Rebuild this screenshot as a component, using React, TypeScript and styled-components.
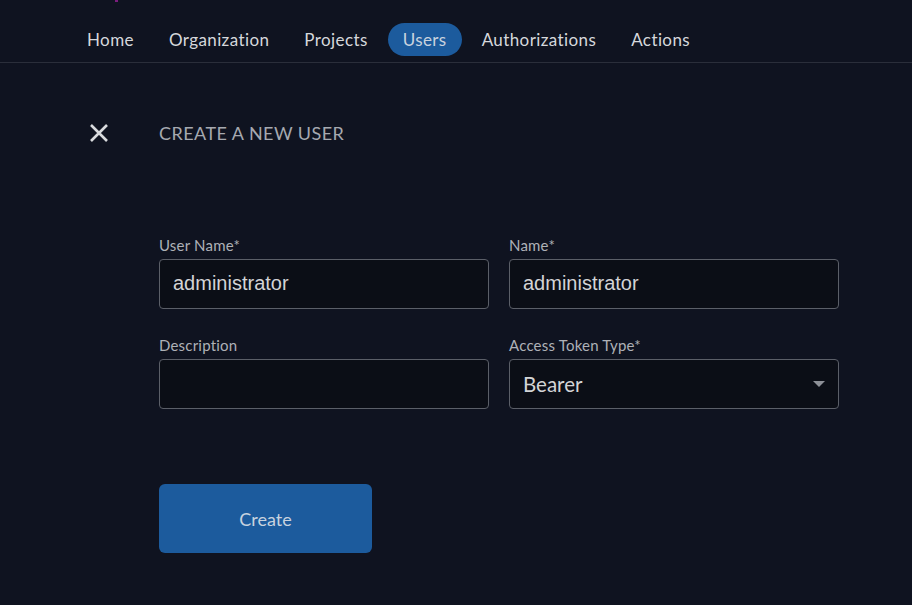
import React from "react";
import styled, { createGlobalStyle } from "styled-components";

const Global = createGlobalStyle`
  html, body { margin: 0; padding: 0; background: #0f1320; }
  body { font-family: Lato, "Open Sans", sans-serif; }
  * { box-sizing: border-box; }
`;

const Page = styled.div`
  width: 912px;
  height: 605px;
  background: #0f1320;
  overflow: hidden;
  position: relative;
`;

const LogoDot = styled.div`
  position: absolute;
  left: 115px;
  top: 0;
  width: 3px;
  height: 2px;
  background: #7a1d7c;
`;

const NavBar = styled.nav`
  display: flex;
  align-items: flex-start;
  gap: 5px;
  padding: 23px 0 0 72px;
  height: 63px;
  border-bottom: 1px solid #2a2e3a;
`;

const NavItem = styled.a<{ $active?: boolean }>`
  display: flex;
  align-items: center;
  height: 33px;
  padding: 0 15px;
  border-radius: 17px;
  font-size: 17px;
  letter-spacing: 0.4px;
  color: ${(p) => (p.$active ? "#c9d3df" : "#d6d8dc")};
  background: ${(p) => (p.$active ? "#1c5b9d" : "transparent")};
  text-decoration: none;
  cursor: pointer;
`;

const Content = styled.main`
  padding: 59px 0 0 89px;
`;

const Header = styled.div`
  display: flex;
  align-items: center;
  gap: 50px;
  height: 22px;
`;

const CloseButton = styled.button`
  display: flex;
  align-items: center;
  justify-content: center;
  width: 20px;
  height: 20px;
  padding: 0;
  border: none;
  background: transparent;
  color: #d9dbde;
  cursor: pointer;
`;

const Title = styled.h1`
  margin: 0;
  font-size: 18px;
  font-weight: 400;
  color: #a6a9b0;
  letter-spacing: 0.45px;
`;

const Body = styled.div`
  padding-left: 70px;
`;

const Form = styled.form`
  margin-top: 93px;
  display: grid;
  grid-template-columns: 330px 330px;
  column-gap: 20px;
  row-gap: 28px;
`;

const Field = styled.div`
  display: flex;
  flex-direction: column;
  gap: 6px;
`;

const Label = styled.label`
  font-size: 15px;
  letter-spacing: 0.2px;
  color: #aeb1b7;
  line-height: 16px;
  height: 16px;
`;

const Input = styled.input`
  height: 50px;
  width: 100%;
  padding: 0 13px 1px;
  border: 1px solid #5b5f68;
  border-radius: 4px;
  background: #0b0e16;
  color: #d3d4d6;
  font-family: "Liberation Sans", Arial, sans-serif;
  font-size: 20px;
  outline: none;
`;

const SelectBox = styled.div`
  height: 50px;
  display: flex;
  align-items: center;
  justify-content: space-between;
  padding: 0 13px;
  border: 1px solid #5b5f68;
  border-radius: 4px;
  background: #0b0e16;
  color: #d3d4d6;
  font-size: 20.5px;
`;

const Caret = styled.span`
  width: 0;
  height: 0;
  border-left: 6px solid transparent;
  border-right: 6px solid transparent;
  border-top: 6px solid #8d9097;
`;

const CreateButton = styled.button`
  margin-top: 75px;
  width: 213px;
  height: 69px;
  border: none;
  border-radius: 6px;
  background: #1c5b9d;
  color: #c8d3df;
  font-family: Lato, sans-serif;
  font-size: 18px;
  cursor: pointer;
`;

export default function App() {
  return (
    <Page>
      <Global />
      <LogoDot />
      <NavBar>
        <NavItem>Home</NavItem>
        <NavItem>Organization</NavItem>
        <NavItem>Projects</NavItem>
        <NavItem $active>Users</NavItem>
        <NavItem>Authorizations</NavItem>
        <NavItem>Actions</NavItem>
      </NavBar>
      <Content>
        <Header>
          <CloseButton aria-label="Close">
            <svg width="20" height="20" viewBox="0 0 20 20">
              <path d="M2 2 L18 18 M18 2 L2 18" stroke="currentColor" strokeWidth="2.6" />
            </svg>
          </CloseButton>
          <Title>CREATE A NEW USER</Title>
        </Header>
        <Body>
          <Form>
            <Field>
              <Label>User Name*</Label>
              <Input defaultValue="administrator" />
            </Field>
            <Field>
              <Label>Name*</Label>
              <Input defaultValue="administrator" />
            </Field>
            <Field>
              <Label>Description</Label>
              <Input defaultValue="" />
            </Field>
            <Field>
              <Label>Access Token Type*</Label>
              <SelectBox>
                <span>Bearer</span>
                <Caret />
              </SelectBox>
            </Field>
          </Form>
          <CreateButton type="button">Create</CreateButton>
        </Body>
      </Content>
    </Page>
  );
}
